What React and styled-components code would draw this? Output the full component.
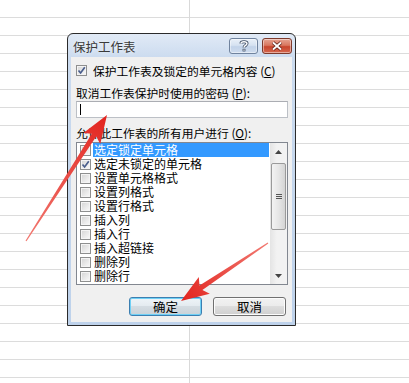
import React from 'react';
import styled, { createGlobalStyle } from 'styled-components';

const GlobalStyle = createGlobalStyle`
  html, body { margin: 0; padding: 0; background: #fff; }
  body { font-family: "Noto Sans CJK SC", "Noto Sans", sans-serif; }
`;

// spreadsheet behind the dialog: 18px rows, one column line at x=189
const Sheet = styled.div`
  position: relative;
  width: 409px;
  height: 383px;
  overflow: hidden;
  box-sizing: border-box;
  padding: 33px 0 0 67px;
  background:
    linear-gradient(to right, transparent 189px, #d9d9d9 189px, #d9d9d9 190px, transparent 190px),
    repeating-linear-gradient(to bottom, transparent 0, transparent 17px, #dcdcdc 17px, #dcdcdc 18px);
`;

const Dialog = styled.div`
  width: 229px;
  box-sizing: border-box;
  border: 1px solid #2b2b2b;
  border-radius: 6px 6px 0 0;
  padding: 0 3px 3px;
  background: linear-gradient(to bottom, #e1eaf6 0, #cbdbef 24px, #bed2eb 100%);
`;

const TitleBar = styled.div`
  height: 23px;
  display: flex;
  align-items: flex-start;
`;

const Title = styled.span`
  flex: 1;
  padding: 5px 0 0 2px;
  font-size: 12.5px;
  line-height: 16px;
  color: #3a3a3a;
  text-shadow: 0 0 5px rgba(255, 255, 255, 0.95);
`;

const CaptionButton = styled.div`
  margin-top: 4px;
  width: ${(p) => (p.$close ? '30px' : '29px')};
  height: 16px;
  box-sizing: border-box;
  border-radius: 3px;
  display: flex;
  align-items: center;
  justify-content: center;
  margin-left: ${(p) => (p.$close ? '4px' : '0')};
  border: 1px solid ${(p) => (p.$close ? '#7d3a2c' : '#70839e')};
  box-shadow: inset 0 0 0 1px rgba(255, 255, 255, 0.45);
  background: ${(p) =>
    p.$close
      ? 'linear-gradient(to bottom, #e6a493 0, #d9775f 45%, #c8452d 55%, #d5684f 100%)'
      : 'linear-gradient(to bottom, #e9f0f8 0, #d6e2f1 45%, #c2d3e9 55%, #cfdcee 100%)'};
`;

const Body = styled.div`
  background: #f0f0f0;
  padding: 6px 4px 6px 5px;
  display: flex;
  flex-direction: column;
  font-size: 11.75px;
  color: #000;
`;

const CheckRow = styled.div`
  height: 15px;
  display: flex;
  align-items: center;
  gap: 6px;
  line-height: 15px;
  white-space: nowrap;
`;

const Label = styled.div`
  margin-top: ${(p) => p.$gap || 7}px;
  line-height: 15px;
  white-space: nowrap;
`;

const TextBox = styled.div`
  margin-top: 1px;
  height: 17px;
  width: 212px;
  box-sizing: border-box;
  border: 1px solid #bcc0c6;
  border-top-color: #abadb3;
  background: #fff;
  display: flex;
  align-items: center;
  padding-left: 3px;
`;

const Caret = styled.span`
  width: 1px;
  height: 11px;
  background: #000;
`;

const ListBox = styled.div`
  margin-top: 2px;
  height: 143px;
  width: 212px;
  box-sizing: border-box;
  border: 1px solid #828790;
  background: #fff;
  display: flex;
`;

const Items = styled.div`
  flex: 1;
  display: flex;
  flex-direction: column;
`;

const Item = styled.div`
  height: 14px;
  display: flex;
  align-items: center;
  font-size: 12px;
  white-space: nowrap;
`;

const ItemText = styled.span`
  flex: 1;
  margin: 0 1px 0 2px;
  padding-left: 1px;
  line-height: 14px;
  background: ${(p) => (p.$selected ? '#3399ff' : 'transparent')};
  color: ${(p) => (p.$selected ? '#fff' : '#000')};
`;

const Box = styled.span`
  position: relative;
  flex: none;
  width: 11px;
  height: 11px;
  box-sizing: border-box;
  margin-left: ${(p) => p.$indent || 0}px;
  border: 1px solid #8e8f8f;
  background: linear-gradient(135deg, #d3d3d3 0, #ebebeb 60%, #fafafa 100%);
  box-shadow: inset 0 0 0 1px #f4f4f4;

  svg {
    position: absolute;
    left: 0;
    top: 0;
  }
`;

const ScrollBar = styled.div`
  width: 17px;
  flex: none;
  display: flex;
  flex-direction: column;
  background: linear-gradient(to right, #e4e4e4 0, #f2f2f2 40%, #f2f2f2 100%);
`;

const Arrow = styled.div`
  height: 17px;
  display: flex;
  align-items: center;
  justify-content: center;
`;

const Thumb = styled.div`
  margin: 3px 1px 0;
  height: 67px;
  box-sizing: border-box;
  border: 1px solid #9a9a9a;
  border-radius: 2px;
  background: linear-gradient(to right, #f3f3f3 0, #e6e6e6 50%, #d4d4d4 100%);
  display: flex;
  flex-direction: column;
  align-items: center;
  justify-content: center;
  gap: 1px;
`;

const Grip = styled.span`
  width: 6px;
  height: 1px;
  background: #555;
`;

const Spacer = styled.div`
  flex: 1;
`;

const Buttons = styled.div`
  margin-top: 12px;
  display: flex;
  justify-content: flex-end;
  gap: 11px;
  padding-right: 2px;
`;

const Button = styled.div`
  width: 73px;
  height: 19px;
  box-sizing: border-box;
  border-radius: 3px;
  display: flex;
  align-items: center;
  justify-content: center;
  font-size: 12.5px;
  border: 1px solid ${(p) => (p.$primary ? '#3c7fb1' : '#707070')};
  box-shadow: inset 0 0 0 1px ${(p) => (p.$primary ? '#6fd0f5' : '#fcfcfc')};
  background: ${(p) =>
    p.$primary
      ? 'linear-gradient(to bottom, #eef4f8 0, #e3eaef 50%, #d4dce2 50%, #c9d2d8 100%)'
      : 'linear-gradient(to bottom, #f2f2f2 0, #ebebeb 50%, #dddddd 50%, #cfcfcf 100%)'};
`;

const Overlay = styled.svg`
  position: absolute;
  left: 0;
  top: 0;
  pointer-events: none;
`;

function Check({ checked, indent }) {
  return (
    <Box $indent={indent}>
      {checked && (
        <svg width="9" height="9" viewBox="0 0 9 9">
          <path d="M1.5 4.5 L3.6 7 L7.8 1.3" fill="none" stroke="#4a5e8c" strokeWidth="1.7" />
        </svg>
      )}
    </Box>
  );
}

function arrowPoints([tx, ty], [px, py], head = 28, wing = 10, neck = 2.6, tail = 0.6) {
  const len = Math.hypot(px - tx, py - ty);
  const ux = (px - tx) / len;
  const uy = (py - ty) / len;
  const nx = -uy;
  const ny = ux;
  const bx = px - ux * head;
  const by = py - uy * head;
  const jx = bx + ux * 4;
  const jy = by + uy * 4;
  const pts = [
    [tx + nx * tail, ty + ny * tail],
    [jx + nx * neck, jy + ny * neck],
    [bx + nx * wing, by + ny * wing],
    [px, py],
    [bx - nx * wing, by - ny * wing],
    [jx - nx * neck, jy - ny * neck],
    [tx - nx * tail, ty - ny * tail],
  ];
  return pts.map((p) => p.map((v) => v.toFixed(1)).join(',')).join(' ');
}

const items = [
  { text: '选定锁定单元格', selected: true },
  { text: '选定未锁定的单元格', checked: true },
  { text: '设置单元格格式' },
  { text: '设置列格式' },
  { text: '设置行格式' },
  { text: '插入列' },
  { text: '插入行' },
  { text: '插入超链接' },
  { text: '删除列' },
  { text: '删除行' },
];

const arrows = [
  { id: 'a1', tail: [26, 241], tip: [107, 115] },
  { id: 'a2', tail: [268, 243], tip: [181, 301] },
];

export default function App() {
  return (
    <Sheet>
      <GlobalStyle />
      <Dialog>
        <TitleBar>
          <Title>保护工作表</Title>
          <CaptionButton>
            <svg width="10" height="12" viewBox="0 0 10 12">
              <path
                d="M2 3.6 C2 1.2 8 1.2 8 3.6 C8 5.4 5 5.4 5 7.6"
                fill="none"
                stroke="#3b4a61"
                strokeWidth="3"
              />
              <path
                d="M2 3.6 C2 1.2 8 1.2 8 3.6 C8 5.4 5 5.4 5 7.6"
                fill="none"
                stroke="#fff"
                strokeWidth="1.4"
              />
              <rect x="3.6" y="8.8" width="2.8" height="2.6" fill="#3b4a61" />
              <rect x="4.3" y="9.5" width="1.4" height="1.2" fill="#fff" />
            </svg>
          </CaptionButton>
          <CaptionButton $close>
            <svg width="12" height="10" viewBox="0 0 12 10">
              <path d="M2 1.5 L10 8.5 M10 1.5 L2 8.5" stroke="#5a1f16" strokeWidth="3.4" />
              <path d="M2 1.5 L10 8.5 M10 1.5 L2 8.5" stroke="#fff" strokeWidth="1.8" />
            </svg>
          </CaptionButton>
        </TitleBar>
        <Body>
          <CheckRow>
            <Check checked />
            <span>
              保护工作表及锁定的单元格内容 (<u>C</u>)
            </span>
          </CheckRow>
          <Label>
            取消工作表保护时使用的密码 (<u>P</u>):
          </Label>
          <TextBox>
            <Caret />
          </TextBox>
          <Label>
            允许此工作表的所有用户进行 (<u>O</u>):
          </Label>
          <ListBox>
            <Items>
              {items.map((it) => (
                <Item key={it.text}>
                  <Check checked={it.checked} indent={3} />
                  <ItemText $selected={it.selected}>{it.text}</ItemText>
                </Item>
              ))}
            </Items>
            <ScrollBar>
              <Arrow>
                <svg width="7" height="4" viewBox="0 0 7 4">
                  <path d="M0 4 L3.5 0 L7 4 Z" fill="#444" />
                </svg>
              </Arrow>
              <Thumb>
                <Grip />
                <Grip />
                <Grip />
              </Thumb>
              <Spacer />
              <Arrow>
                <svg width="7" height="4" viewBox="0 0 7 4">
                  <path d="M0 0 L7 0 L3.5 4 Z" fill="#444" />
                </svg>
              </Arrow>
            </ScrollBar>
          </ListBox>
          <Buttons>
            <Button $primary>确定</Button>
            <Button>取消</Button>
          </Buttons>
        </Body>
      </Dialog>
      <Overlay width="409" height="383" viewBox="0 0 409 383">
        <defs>
          {arrows.map((a) => (
            <linearGradient
              key={a.id}
              id={a.id}
              gradientUnits="userSpaceOnUse"
              x1={a.tail[0]}
              y1={a.tail[1]}
              x2={a.tip[0]}
              y2={a.tip[1]}
            >
              <stop offset="0" stopColor="#f27a72" />
              <stop offset="1" stopColor="#e2241e" />
            </linearGradient>
          ))}
        </defs>
        {arrows.map((a) => (
          <polygon key={a.id} points={arrowPoints(a.tail, a.tip)} fill={`url(#${a.id})`} />
        ))}
      </Overlay>
    </Sheet>
  );
}
